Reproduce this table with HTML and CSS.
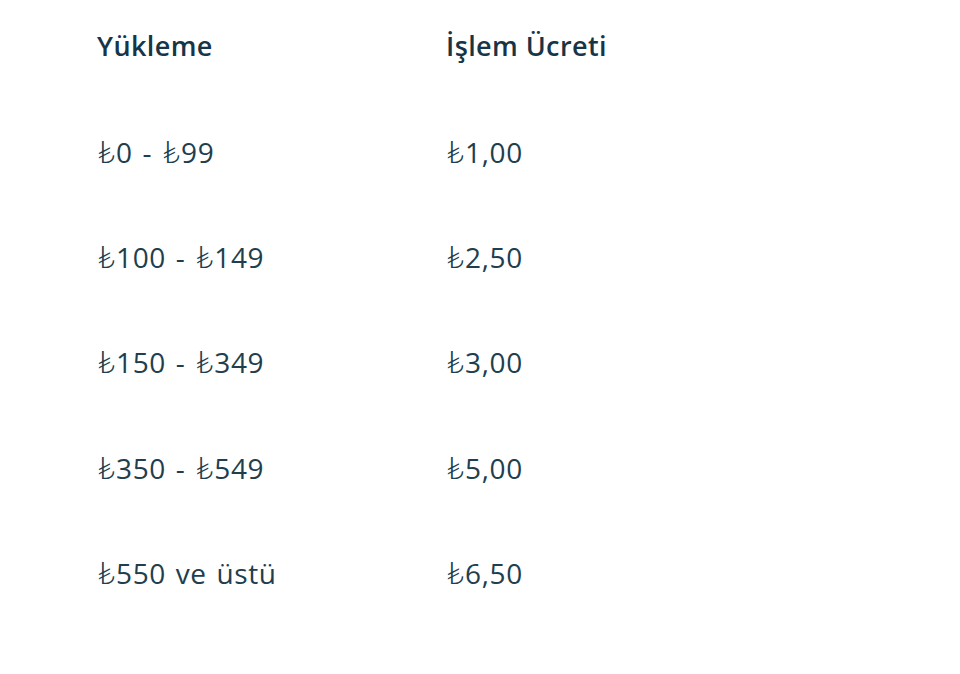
FILE: index.html
```html
<!DOCTYPE html>
<html lang="tr">
<head>
<meta charset="utf-8">
<link rel="stylesheet" href="styles.css">
</head>
<body>
<div class="fees">
  <div class="row head"><div class="cell">Yükleme</div><div class="cell">İşlem Ücreti</div></div>
  <div class="row"><div class="cell"><span class="tl">₺</span>0 - <span class="tl">₺</span>99</div><div class="cell"><span class="tl">₺</span>1,00</div></div>
  <div class="row"><div class="cell"><span class="tl">₺</span>100 - <span class="tl">₺</span>149</div><div class="cell"><span class="tl">₺</span>2,50</div></div>
  <div class="row"><div class="cell"><span class="tl">₺</span>150 - <span class="tl">₺</span>349</div><div class="cell"><span class="tl">₺</span>3,00</div></div>
  <div class="row"><div class="cell"><span class="tl">₺</span>350 - <span class="tl">₺</span>549</div><div class="cell"><span class="tl">₺</span>5,00</div></div>
  <div class="row"><div class="cell"><span class="tl">₺</span>550 ve üstü</div><div class="cell"><span class="tl">₺</span>6,50</div></div>
</div>
</body>
</html>
```

FILE: styles.css
```css
html, body {
  margin: 0;
  padding: 0;
  background: #ffffff;
}
body {
  width: 960px;
  height: 674px;
  overflow: hidden;
  font-family: "Open Sans", "DejaVu Sans", sans-serif;
  color: #213e4e;
  font-variant-ligatures: none;
}
.fees {
  margin-top: -7px;
  padding: 0 0 0 97px;
  display: flex;
  flex-direction: column;
}
.row {
  display: grid;
  grid-template-columns: 349px 1fr;
  height: 105.4px;
  align-items: center;
  font-size: 28px;
  line-height: 32px;
  letter-spacing: 0.6px;
  word-spacing: 2px;
}
.head {
  font-size: 27px;
  font-weight: 600;
  letter-spacing: 0.4px;
  word-spacing: 0;
  color: #173547;
}
.tl {
  font-family: "Lato", "DejaVu Sans", sans-serif;
  font-weight: 300;
  font-size: 32px;
  letter-spacing: 0.5px;
}
```
